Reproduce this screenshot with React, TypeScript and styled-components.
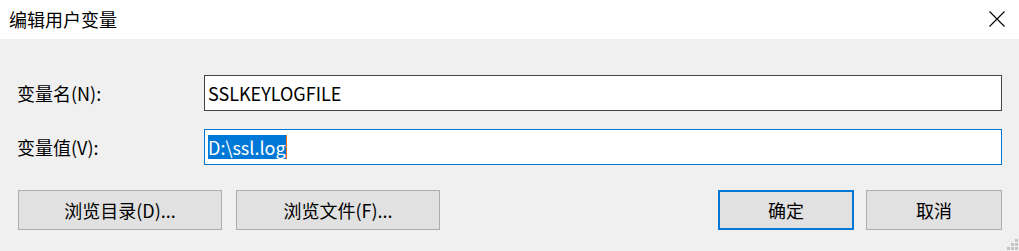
import styled, { createGlobalStyle } from 'styled-components';

const GlobalStyle = createGlobalStyle`
  html, body {
    margin: 0;
    padding: 0;
    background: #f0f0f0;
  }
  * {
    box-sizing: border-box;
  }
`;

const font = `"Segoe UI", "Noto Sans CJK SC", "Noto Sans", sans-serif`;

const App = () => {
  return (
    <>
      <GlobalStyle />
      <Dialog>
        <TitleBar>
          <Title>编辑用户变量</Title>
          <CloseButton aria-label="关闭">
            <svg width="16" height="16" viewBox="0 0 16 16">
              <path d="M0.5 0.5 L15.5 15.5 M15.5 0.5 L0.5 15.5" stroke="#000" strokeWidth="1.1" fill="none" />
            </svg>
          </CloseButton>
        </TitleBar>
        <Body>
          <Fields>
            <Label>变量名(N):</Label>
            <Field>SSLKEYLOGFILE</Field>
            <Label>变量值(V):</Label>
            <Field focused>
              <Selected>D:\ssl.log</Selected>
              <Caret />
            </Field>
          </Fields>
          <ButtonRow>
            <ButtonGroup>
              <Button wide>浏览目录(D)...</Button>
              <Button wide>浏览文件(F)...</Button>
            </ButtonGroup>
            <ButtonGroup>
              <Button primary>确定</Button>
              <Button>取消</Button>
            </ButtonGroup>
          </ButtonRow>
          <Grip>
            <Dot style={{ gridColumn: 3, gridRow: 1 }} />
            <Dot style={{ gridColumn: 2, gridRow: 2 }} />
            <Dot style={{ gridColumn: 3, gridRow: 2 }} />
            <Dot style={{ gridColumn: 1, gridRow: 3 }} />
            <Dot style={{ gridColumn: 2, gridRow: 3 }} />
            <Dot style={{ gridColumn: 3, gridRow: 3 }} />
          </Grip>
        </Body>
      </Dialog>
    </>
  );
};

export default App;

const Dialog = styled.div`
  width: 1019px;
  height: 251px;
  display: flex;
  flex-direction: column;
  font-family: ${font};
  color: #000;
  overflow: hidden;
`;

const TitleBar = styled.div`
  height: 39px;
  background: #fff;
  display: flex;
  align-items: center;
  justify-content: space-between;
  padding: 0 14px 2px 9px;
`;

const Title = styled.div`
  font-size: 18px;
  line-height: 20px;
`;

const CloseButton = styled.div`
  width: 16px;
  height: 16px;
  display: flex;
  margin-top: 1px;
`;

const Body = styled.div`
  position: relative;
  flex: 1;
  background: #f0f0f0;
  padding: 36px 17px 0 17px;
`;

const Fields = styled.div`
  display: grid;
  grid-template-columns: 187px 1fr;
  row-gap: 18px;
  align-items: center;
`;

const Label = styled.div`
  font-size: 18px;
  line-height: 20px;
`;

const Field = styled.div<{ focused?: boolean }>`
  height: 36px;
  background: #fff;
  border: 1px solid ${(p) => (p.focused ? '#0078d7' : '#444444')};
  padding: 0 3px;
  display: flex;
  align-items: center;
  font-size: 18px;
  white-space: pre;
`;

const Selected = styled.span`
  background: #0078d7;
  color: #fff;
  line-height: 24px;
  height: 24px;
`;

const Caret = styled.span`
  width: 1px;
  height: 24px;
  background: #e8731f;
`;

const ButtonRow = styled.div`
  display: flex;
  justify-content: space-between;
  margin-top: 25px;
  padding-left: 1px;
`;

const ButtonGroup = styled.div`
  display: flex;
  gap: 12px;

  &:first-child {
    gap: 14px;
  }
`;

const Button = styled.div<{ wide?: boolean; primary?: boolean }>`
  width: ${(p) => (p.wide ? '204px' : '136px')};
  height: 40px;
  background: #e1e1e1;
  border: ${(p) => (p.primary ? '2px solid #0078d7' : '1px solid #adadad')};
  display: flex;
  align-items: center;
  justify-content: center;
  font-size: 18px;
  padding-bottom: 1px;
`;

const Grip = styled.div`
  position: absolute;
  right: 1px;
  bottom: 1px;
  display: grid;
  grid-template-columns: repeat(3, 3px);
  grid-template-rows: repeat(3, 3px);
  gap: 1px;
`;

const Dot = styled.span`
  background: #c4c4c4;
`;
